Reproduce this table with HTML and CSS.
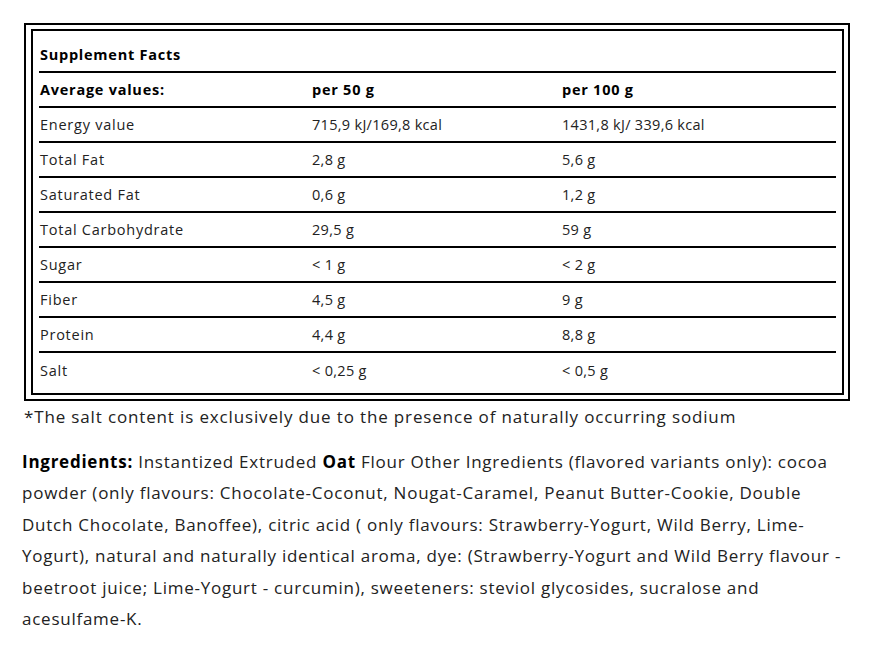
FILE: index.html
```html
<!DOCTYPE html>
<html lang="en">
<head>
<meta charset="utf-8">
<title>Supplement Facts</title>
<link rel="stylesheet" href="styles.css">
</head>
<body>
<div class="facts-outer">
  <div class="facts-inner">
    <div class="row title-row"><span class="cell bold">Supplement Facts</span></div>
    <div class="row head-row">
      <span class="cell bold">Average values:</span>
      <span class="cell bold">per 50 g</span>
      <span class="cell bold">per 100 g</span>
    </div>
    <div class="row"><span class="cell">Energy value</span><span class="cell num">715,9 kJ/169,8 kcal</span><span class="cell num">1431,8 kJ/ 339,6 kcal</span></div>
    <div class="row"><span class="cell">Total Fat</span><span class="cell num">2,8 g</span><span class="cell num">5,6 g</span></div>
    <div class="row"><span class="cell">Saturated Fat</span><span class="cell num">0,6 g</span><span class="cell num">1,2 g</span></div>
    <div class="row"><span class="cell">Total Carbohydrate</span><span class="cell num">29,5 g</span><span class="cell num">59 g</span></div>
    <div class="row"><span class="cell">Sugar</span><span class="cell num">&lt; 1 g</span><span class="cell num">&lt; 2 g</span></div>
    <div class="row"><span class="cell">Fiber</span><span class="cell num">4,5 g</span><span class="cell num">9 g</span></div>
    <div class="row"><span class="cell">Protein</span><span class="cell num">4,4 g</span><span class="cell num">8,8 g</span></div>
    <div class="row last"><span class="cell">Salt</span><span class="cell num">&lt; 0,25 g</span><span class="cell num">&lt; 0,5 g</span></div>
  </div>
</div>
<p class="note">*The salt content is exclusively due to the presence of naturally occurring sodium</p>
<p class="ingredients"><b>Ingredients:</b> Instantized Extruded <b>Oat</b> Flour Other Ingredients (flavored variants only): cocoa powder (only flavours: Chocolate-Coconut, Nougat-Caramel, Peanut Butter-Cookie, Double Dutch Chocolate, Banoffee), citric acid ( only flavours: Strawberry-Yogurt, Wild Berry, Lime-Yogurt), natural and naturally identical aroma, dye: (Strawberry-Yogurt and Wild Berry flavour - beetroot juice; Lime-Yogurt - curcumin), sweeteners: steviol glycosides, sucralose and acesulfame-K.</p>
</body>
</html>
```
FILE: styles.css
```css
html, body {
  margin: 0;
  padding: 0;
  background: #fff;
}
body {
  padding: 8px;
  font-family: "Open Sans", "DejaVu Sans", sans-serif;
  color: #222;
}
.facts-outer {
  box-sizing: border-box;
  width: 826px;
  margin: 15px 0 0 16px;
  border: 2px solid #000;
  padding: 4px 4px 4px 5px;
}
.facts-inner {
  border: 2px solid #000;
  padding: 6px;
}
.row {
  display: grid;
  grid-template-columns: 272px 250px 1fr;
  align-items: center;
  height: 33px;
  border-bottom: 2px solid #000;
  font-size: 14.5px;
  letter-spacing: 0.75px;
}
.row.title-row {
  height: 34px;
  display: flex;
}
.row.last {
  border-bottom: none;
  height: 34px;
}
.cell {
  padding-left: 1px;
}
.cell.num {
  letter-spacing: 0.3px;
}
.bold {
  font-weight: 700;
  color: #000;
}
.note {
  margin: 6px 0 0 16px;
  font-size: 17px;
  letter-spacing: 0.85px;
  line-height: 20px;
}
.ingredients {
  box-sizing: border-box;
  margin: 19px 0 0 14px;
  width: 830px;
  font-size: 17px;
  letter-spacing: 0.75px;
  line-height: 31.4px;
}
.ingredients b {
  color: #000;
}
```
